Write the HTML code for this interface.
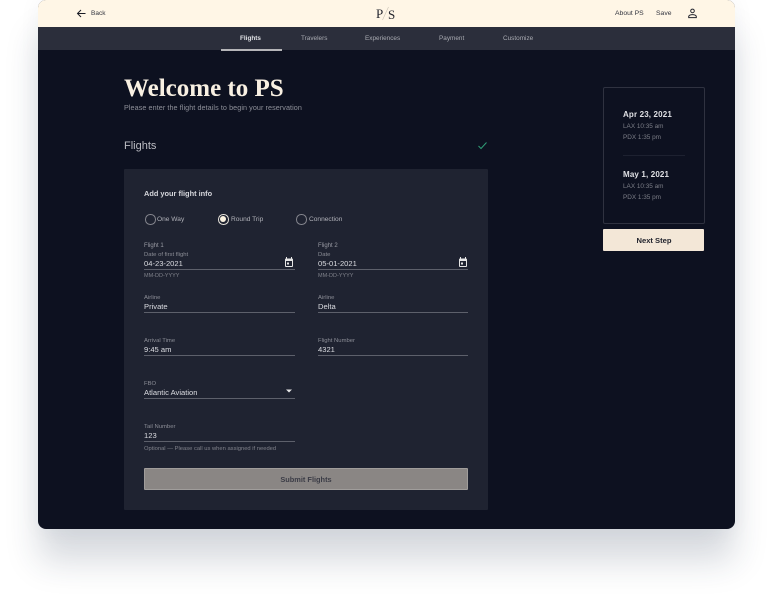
<!DOCTYPE html>
<html><head><meta charset="utf-8">
<style>
html,body{margin:0;padding:0;background:#fff;width:774px;height:605px;overflow:hidden}
body{position:relative;font-family:"Liberation Sans",sans-serif}
.win{position:absolute;left:38px;top:0;width:697px;height:529px;background:#0d1120;border-radius:8px;overflow:hidden}
.sh{position:absolute;left:38px;top:0;width:697px;height:529px;border-radius:8px;box-shadow:0 33px 34px -1px rgba(35,50,80,.18),0 0 22px rgba(35,50,80,.05)}
.abs{position:absolute}
.t{position:absolute;white-space:nowrap;line-height:12px;height:12px}
.lab{font-size:5.9px;color:#8b8d96}
.val{font-size:7.6px;color:#dcdde2}
.ln{position:absolute;height:1px;background:#5d606b;width:151px}
.r{position:absolute;width:8.5px;height:8.5px;border:1px solid #85868e;border-radius:50%}
.n{font-size:6.4px;color:#a9abb2;top:32.5px}
</style></head><body>
<div class="sh"></div>
<div class="win"></div>

<div class="abs" style="left:38px;top:0;width:697px;height:27px;background:#fff6e6;border-radius:8px 8px 0 0"></div>
<div class="abs" style="left:38px;top:27px;width:697px;height:23px;background:#2b2e3b"></div>

<svg class="abs" style="left:76px;top:8px" width="11" height="11" viewBox="0 0 11 11" fill="none" stroke="#1a1c26" stroke-width="1"><path d="M9.5 5.5H1.5M5 2L1.5 5.5 5 9"/></svg>
<div class="t" style="left:91px;top:7.5px;font-size:6.5px;color:#33353f">Back</div>

<div class="t" style="left:376px;top:8px;font-family:'Liberation Serif',serif;font-size:13px;color:#23252e">P</div>
<svg class="abs" style="left:381px;top:6px" width="9" height="15" viewBox="0 0 9 15"><path d="M7.5 1L1.5 14" stroke="#c9c2b4" stroke-width=".6"/></svg>
<div class="t" style="left:388px;top:8.5px;font-family:'Liberation Serif',serif;font-size:13px;color:#23252e">S</div>

<div class="t" style="left:615px;top:8px;font-size:6.8px;color:#33353f">About PS</div>
<div class="t" style="left:656px;top:8px;font-size:6.8px;color:#33353f">Save</div>
<svg class="abs" style="left:687px;top:8px" width="11" height="11" viewBox="0 0 11 11" fill="none" stroke="#23252e" stroke-width="1"><circle cx="5.5" cy="2.9" r="1.8"/><path d="M1.7 9.6V8.6C1.7 7.2 4 6.6 5.5 6.6S9.3 7.2 9.3 8.6V9.6Z"/></svg>

<div class="t n" style="left:240px;font-weight:bold;color:#dfe0e4">Flights</div>
<div class="abs" style="left:221px;top:49px;width:61px;height:1.5px;background:#b5b5b8"></div>
<div class="t n" style="left:301px">Travelers</div>
<div class="t n" style="left:365px">Experiences</div>
<div class="t n" style="left:439px">Payment</div>
<div class="t n" style="left:503px">Customize</div>

<div class="t" style="left:124px;top:76px;height:26px;line-height:26px;font-family:'Liberation Serif',serif;font-weight:bold;font-size:25px;color:#f8f0e2">Welcome to PS</div>
<div class="t" style="left:124px;top:102px;font-size:7.2px;color:#8e9099;letter-spacing:.08px">Please enter the flight details to begin your reservation</div>

<div class="t" style="left:124px;top:139px;height:14px;line-height:14px;font-size:11px;color:#bcbdc3">Flights</div>
<svg class="abs" style="left:477px;top:140px" width="11" height="11" viewBox="0 0 11 11" fill="none" stroke="#2f9d76" stroke-width="1"><path d="M1.5 6L4 8.5 9.5 2.5"/></svg>

<div class="abs" style="left:124px;top:169px;width:364px;height:341px;background:#1f2331;border-radius:1px"></div>

<div class="t" style="left:144px;top:187.5px;font-size:7.4px;font-weight:bold;color:#d6d7dc">Add your flight info</div>

<div class="r" style="left:145px;top:214px"></div>
<div class="t" style="left:157px;top:213.5px;font-size:6.6px;color:#b0b1b8">One Way</div>
<div class="r" style="left:218px;top:214px;border-color:#e8e4dc"></div>
<div class="abs" style="left:220.3px;top:216.3px;width:6px;height:6px;border-radius:50%;background:#fbf2e0"></div>
<div class="t" style="left:231px;top:213.5px;font-size:6.6px;color:#b0b1b8">Round Trip</div>
<div class="r" style="left:296px;top:214px"></div>
<div class="t" style="left:309px;top:213.5px;font-size:6.6px;color:#b0b1b8">Connection</div>

<div class="t" style="left:144px;top:239.5px;font-size:6px;color:#9a9ca4">Flight 1</div>
<div class="t lab" style="left:144px;top:248.5px">Date of first flight</div>
<div class="t val" style="left:144px;top:257.5px">04-23-2021</div>
<svg class="abs" style="left:284px;top:257px" width="10" height="11" viewBox="0 0 10 11"><path d="M2.5 0v2M7.5 0v2" stroke="#e6e6e6" stroke-width="1"/><rect x="1" y="1.5" width="8" height="8.5" rx="1" fill="#e6e6e6"/><rect x="2" y="4" width="6" height="5" fill="#1f2331"/><rect x="3" y="5.5" width="2" height="2" fill="#e6e6e6"/></svg>
<div class="ln" style="left:144px;top:269px"></div>
<div class="t" style="left:144px;top:270px;font-size:5.5px;color:#7f818a">MM-DD-YYYY</div>

<div class="t" style="left:318px;top:239.5px;font-size:6px;color:#9a9ca4">Flight 2</div>
<div class="t lab" style="left:318px;top:248.5px">Date</div>
<div class="t val" style="left:318px;top:257.5px">05-01-2021</div>
<svg class="abs" style="left:458px;top:257px" width="10" height="11" viewBox="0 0 10 11"><path d="M2.5 0v2M7.5 0v2" stroke="#e6e6e6" stroke-width="1"/><rect x="1" y="1.5" width="8" height="8.5" rx="1" fill="#e6e6e6"/><rect x="2" y="4" width="6" height="5" fill="#1f2331"/><rect x="3" y="5.5" width="2" height="2" fill="#e6e6e6"/></svg>
<div class="ln" style="left:318px;top:269px;width:150px"></div>
<div class="t" style="left:318px;top:270px;font-size:5.5px;color:#7f818a">MM-DD-YYYY</div>

<div class="t lab" style="left:144px;top:291.5px">Airline</div>
<div class="t val" style="left:144px;top:300.5px">Private</div>
<div class="ln" style="left:144px;top:312px"></div>
<div class="t lab" style="left:318px;top:291.5px">Airline</div>
<div class="t val" style="left:318px;top:300.5px">Delta</div>
<div class="ln" style="left:318px;top:312px;width:150px"></div>

<div class="t lab" style="left:144px;top:334.5px">Arrival Time</div>
<div class="t val" style="left:144px;top:343.5px">9:45 am</div>
<div class="ln" style="left:144px;top:355px"></div>
<div class="t lab" style="left:318px;top:334.5px">Flight Number</div>
<div class="t val" style="left:318px;top:343.5px">4321</div>
<div class="ln" style="left:318px;top:355px;width:150px"></div>

<div class="t lab" style="left:144px;top:377.5px">FBO</div>
<div class="t val" style="left:144px;top:386.5px">Atlantic Aviation</div>
<svg class="abs" style="left:286px;top:389px" width="6" height="4" viewBox="0 0 6 4"><path d="M0 .5h6L3 3.5z" fill="#e6e6e6"/></svg>
<div class="ln" style="left:144px;top:398px"></div>

<div class="t lab" style="left:144px;top:420.5px">Tail Number</div>
<div class="t val" style="left:144px;top:429.5px">123</div>
<div class="ln" style="left:144px;top:441px"></div>
<div class="t" style="left:144px;top:442.5px;font-size:5.8px;color:#80828b">Optional — Please call us when assigned if needed</div>

<div class="abs" style="left:144px;top:468px;width:322px;height:20px;background:#8a8684;border:1px solid #a09d9b;border-radius:1px"></div>
<div class="t" style="left:144px;top:473.5px;width:324px;text-align:center;font-size:7.4px;font-weight:bold;color:#3b3c46">Submit Flights</div>

<div class="abs" style="left:603px;top:87px;width:100px;height:135px;border:1px solid #2f3240;border-radius:2px"></div>
<div class="t" style="left:623px;top:108.5px;font-size:8px;font-weight:bold;color:#dfe0e4;letter-spacing:.15px">Apr 23, 2021</div>
<div class="t" style="left:623px;top:120.5px;font-size:6.4px;color:#7c7e87">LAX 10:35 am</div>
<div class="t" style="left:623px;top:131.5px;font-size:6.4px;color:#7c7e87">PDX 1:35 pm</div>
<div class="abs" style="left:623px;top:155px;width:62px;height:1px;background:#1d2130"></div>
<div class="t" style="left:623px;top:168.5px;font-size:8px;font-weight:bold;color:#dfe0e4;letter-spacing:.15px">May 1, 2021</div>
<div class="t" style="left:623px;top:180.5px;font-size:6.4px;color:#7c7e87">LAX 10:35 am</div>
<div class="t" style="left:623px;top:191.5px;font-size:6.4px;color:#7c7e87">PDX 1:35 pm</div>

<div class="abs" style="left:603px;top:229px;width:101px;height:22px;background:#f3e7d7;border-radius:1px"></div>
<div class="t" style="left:603.5px;top:234.5px;width:101px;text-align:center;font-size:7.6px;font-weight:bold;color:#23252e">Next Step</div>
</body></html>
